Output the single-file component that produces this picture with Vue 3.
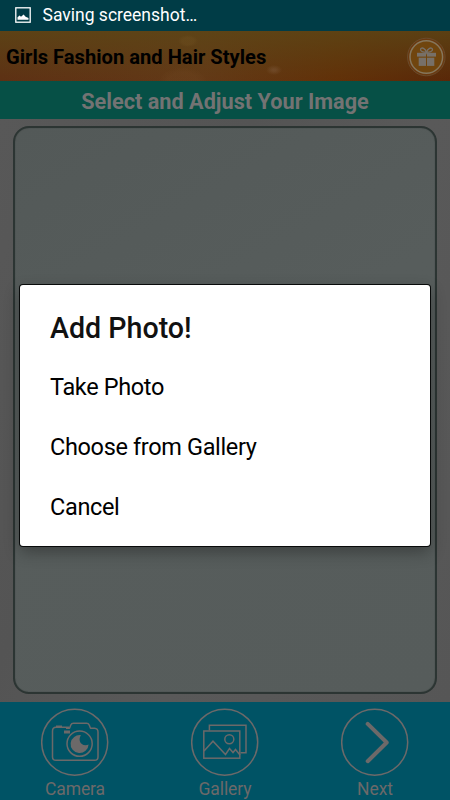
<script setup>
const options = ['Take Photo', 'Choose from Gallery', 'Cancel']
</script>

<template>
  <div class="screen">
    <div class="status">
      <svg class="pic" width="16" height="16" viewBox="0 0 16 16">
        <rect x="0.8" y="0.8" width="14.4" height="14.4" fill="none" stroke="#fff" stroke-width="1.3" />
        <path d="M2.5 12.8V10.2L4.6 8.6L6 9.7L8.6 7.6L10.6 9.8L13.5 11V12.8Z" fill="#fff" />
      </svg>
      <span>Saving screenshot…</span>
    </div>
    <header class="appbar">
      <h1>Girls Fashion and Hair Styles</h1>
      <svg class="gift" width="40" height="40" viewBox="0 0 40 40">
        <circle cx="20.3" cy="20" r="18.8" fill="#6a390f" stroke="#6b4f32" stroke-width="0.8" />
        <circle cx="20.3" cy="20" r="16.3" fill="#70450e" stroke="#85765c" stroke-width="1.5" />
        <g fill="#777068">
          <rect x="11" y="15.8" width="9" height="3.8" />
          <rect x="21" y="15.8" width="9" height="3.8" />
          <rect x="12.7" y="20.7" width="7.3" height="8.2" />
          <rect x="21" y="20.7" width="7.3" height="8.2" />
        </g>
        <path d="M20.5 15.4C17.5 15.4 14 14.4 14.5 12.2C15.5 9.6 19.5 11.6 20.5 15.4C21.5 11.6 25.5 9.6 26.5 12.2C27 14.4 23.5 15.4 20.5 15.4Z" fill="none" stroke="#777068" stroke-width="1.3" />
      </svg>
    </header>
    <h2 class="subtitle">Select and Adjust Your Image</h2>
    <main class="work">
      <div class="frame"></div>
    </main>
    <nav class="bottom">
      <div class="tab">
        <svg width="68" height="68" viewBox="0 0 68 68">
          <g fill="none" stroke="#6c6969" stroke-width="1.5" stroke-linejoin="round">
            <circle cx="33.7" cy="34.2" r="33" />
            <path d="M28 19.2H15Q11.5 19.2 11.5 23V49Q11.5 52.3 15 52.3H53.5Q57 52.3 57 49V24Q57 20.4 53.5 20.2H49.5L48.2 17Q47.5 15.2 45.5 15.2H32.5Q30.5 15.2 29.8 17L28.5 20.2H25" />
            <circle cx="38.6" cy="35.7" r="12.6" />
          </g>
          <path d="M15 17.5H21V20H15ZM23 22.4H29V25.6H23Z" fill="#6c6969" />
          <path d="M40 27.2A9 9 0 1 0 47.6 36.5C44 38.5 39.5 36.5 38.8 33C38.3 30.8 38.8 28.7 40 27.2Z" fill="#6c6969" />
        </svg>
        <span>Camera</span>
      </div>
      <div class="tab">
        <svg width="68" height="68" viewBox="0 0 68 68">
          <g fill="none" stroke="#6c6969" stroke-width="1.5">
            <circle cx="33.7" cy="34.2" r="33" />
            <rect x="12.8" y="23" width="36" height="27.2" />
            <path d="M18.4 22.5V17.2H55V44.8H49.5M13 43L22 33.2L34.5 46.5L38.5 40.5L42 44.5L44.5 41.5L49 47" />
            <circle cx="38.3" cy="31.3" r="4.5" />
          </g>
        </svg>
        <span>Gallery</span>
      </div>
      <div class="tab">
        <svg width="68" height="68" viewBox="0 0 68 68">
          <circle cx="33.7" cy="34.2" r="33" fill="none" stroke="#6c6969" stroke-width="1.5" />
          <path d="M26.7 15.9L45.7 34.5L26.7 53.2" fill="none" stroke="#6c6969" stroke-width="4" stroke-linecap="round" stroke-linejoin="round" />
        </svg>
        <span>Next</span>
      </div>
    </nav>
    <section class="dialog" role="dialog">
      <h3>Add Photo!</h3>
      <button v-for="option in options" :key="option" type="button">{{ option }}</button>
    </section>
  </div>
</template>

<style>
body { margin: 0; }
</style>

<style scoped>
.screen {
  position: relative;
  display: flex;
  flex-direction: column;
  width: 450px;
  height: 800px;
  overflow: hidden;
  font-family: Roboto, "Liberation Sans", sans-serif;
  background: #585858;
}
h1, h2, h3 { margin: 0; white-space: nowrap; }
.status {
  display: flex;
  align-items: center;
  flex: 0 0 31px;
  box-sizing: border-box;
  padding: 0 0 1px 14.5px;
  gap: 12px;
  color: #fff;
  font-size: 17.5px;
  background: #003c46;
}
.appbar {
  display: flex;
  align-items: center;
  justify-content: space-between;
  flex: 0 0 50px;
  box-sizing: border-box;
  padding: 2px 4px 0 6px;
  background:
    radial-gradient(ellipse 10px 6px at 188px 10px, #76572440 60%, transparent),
    radial-gradient(ellipse 24px 14px at 183px 50px, #744c2638 60%, transparent),
    radial-gradient(ellipse 8px 5px at 274px 39px, #78533490 20%, transparent),
    linear-gradient(to bottom, rgba(92, 70, 22, 0.8), rgba(94, 52, 18, 0.1)),
    linear-gradient(to right, #5d3014, #633917 45%, #623007 75%, #592607);
}
h1 { font-size: 20.15px; font-weight: 700; line-height: 24px; color: #000; }
.subtitle {
  display: flex;
  align-items: center;
  justify-content: center;
  flex: 0 0 38px;
  box-sizing: border-box;
  padding-top: 2px;
  font-size: 21.7px;
  font-weight: 700;
  color: #737373;
  background: #065046;
}
.work {
  flex: 0 0 583px;
  box-sizing: border-box;
  padding: 7px 13px 7px 13px;
  background: linear-gradient(115deg, #585858, #545454 35%, #595959 60%, #565656);
}
.frame {
  height: 568px;
  box-sizing: border-box;
  border: 2px solid #2c3533;
  border-radius: 16px;
  background: linear-gradient(150deg, #535958, #575d5c 45%, #565c5b);
  box-shadow: inset 0 0 1px #2c3533;
}
.bottom {
  display: flex;
  flex: 0 0 98px;
  background: #005365;
}
.tab {
  display: flex;
  flex: 1;
  flex-direction: column;
  align-items: center;
  padding-top: 6px;
  gap: 2px;
  font-size: 17.5px;
  letter-spacing: -0.1px;
  line-height: 22px;
  color: #6c6969;
}
.tab svg { flex: none; }
.dialog {
  position: absolute;
  left: 20px;
  top: 285px;
  width: 410px;
  height: 261px;
  box-sizing: border-box;
  padding: 24px 30px 0;
  border-radius: 3px;
  background: #fff;
  box-shadow: 0 0 0 1px #080a0a, 0 6px 16px rgba(0, 0, 0, 0.32);
}
h3 { height: 48px; font-size: 28.6px; font-weight: 500; line-height: 38px; color: #111; }
.dialog button {
  display: block;
  width: 100%;
  height: 60px;
  padding: 0;
  border: 0;
  background: none;
  font: 400 23.5px/60px Roboto, "Liberation Sans", sans-serif;
  letter-spacing: -0.35px;
  text-align: left;
  color: #000;
}
</style>
